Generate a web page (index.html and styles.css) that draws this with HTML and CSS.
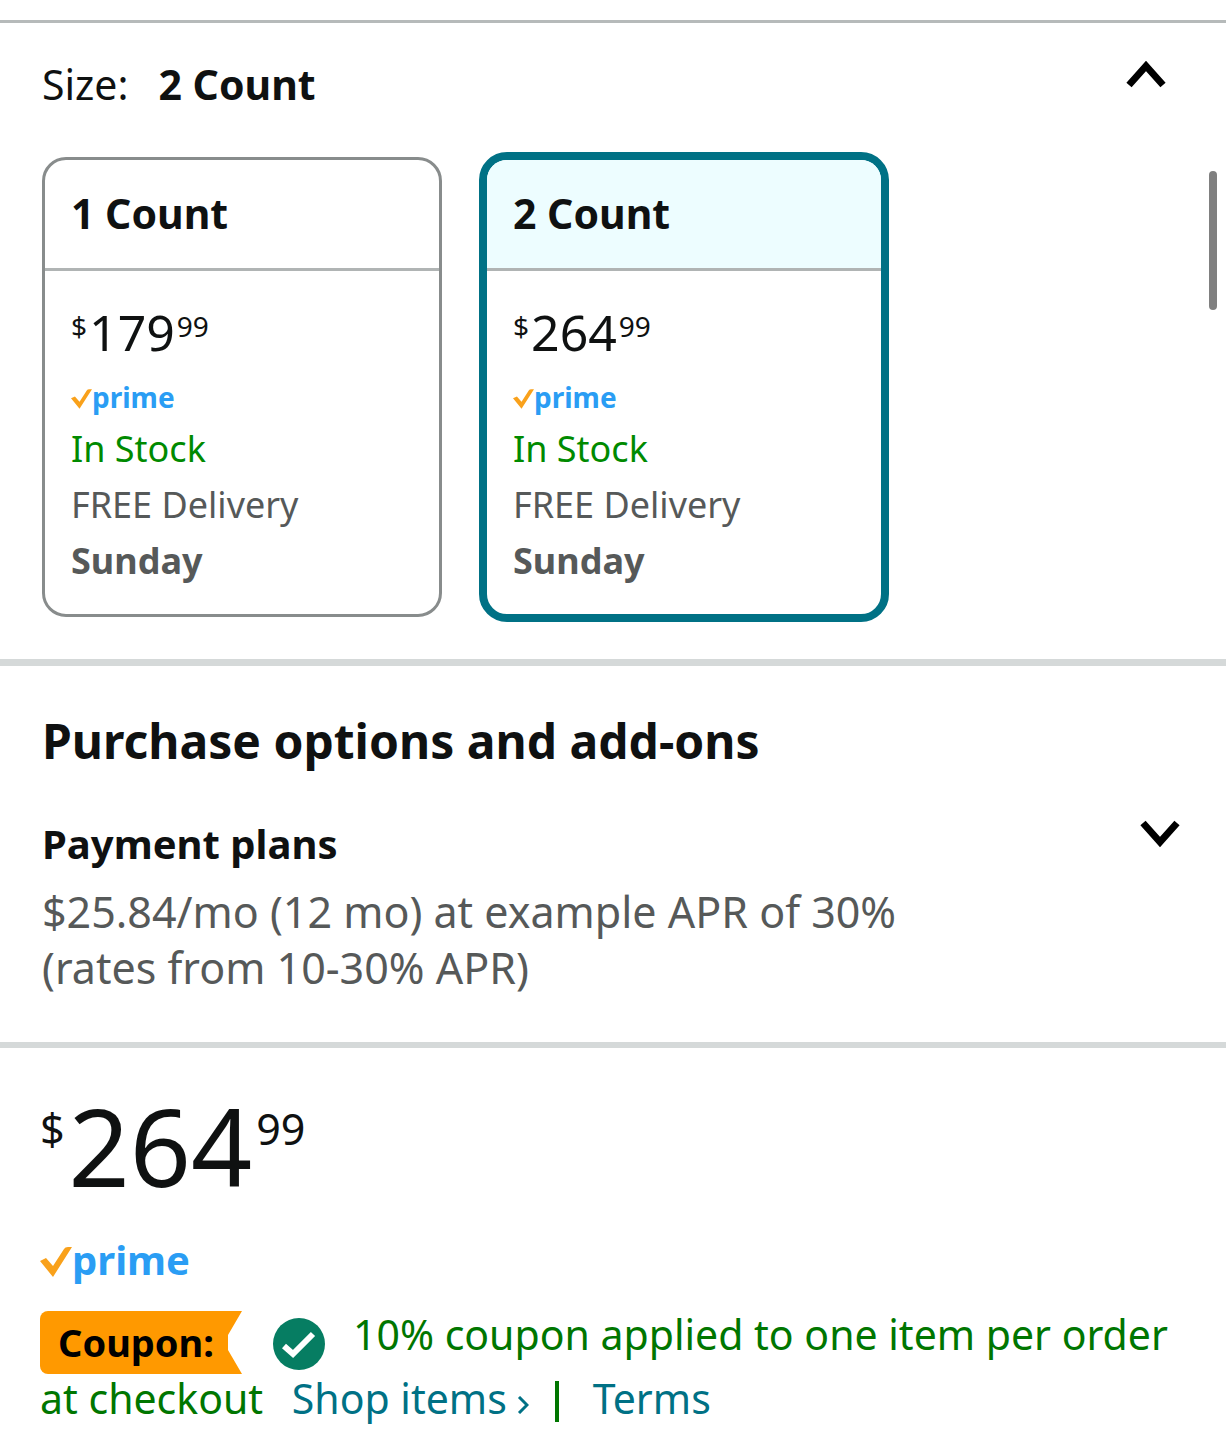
FILE: index.html
```html
<!DOCTYPE html>
<html lang="en">
<head>
<meta charset="utf-8">
<meta name="viewport" content="width=device-width, initial-scale=1">
<title>Product options</title>
<link rel="stylesheet" href="styles.css">
</head>
<body>
<svg class="defs" aria-hidden="true">
  <symbol id="tick" viewBox="0 0 32 30"><path d="M0 14 L6 11 L13 19 L24 2 Q25 0 28 0 L32 0 L13 30 Z"/></symbol>
</svg>
<main>
  <section class="sizes">
    <header class="row">
      <h2 class="size-title"><span>Size:</span> <strong>2 Count</strong></h2>
      <button class="toggle toggle-up" type="button" aria-label="Collapse sizes" aria-expanded="true">
        <svg class="chevron" viewBox="0 0 40 28"><path d="M3 25 L20 6 L37 25"/></svg>
      </button>
    </header>
    <div class="cards">
      <button class="card" type="button" aria-pressed="false">
        <span class="card-name">1 Count</span>
        <span class="card-body">
          <span class="price"><span class="small">$</span>179<span class="small">99</span></span>
          <span class="prime"><svg class="tick"><use href="#tick"/></svg>prime</span>
          <span class="stock">In Stock</span>
          <span>FREE Delivery</span>
          <strong>Sunday</strong>
        </span>
      </button>
      <button class="card selected" type="button" aria-pressed="true">
        <span class="card-name">2 Count</span>
        <span class="card-body">
          <span class="price"><span class="small">$</span>264<span class="small">99</span></span>
          <span class="prime"><svg class="tick"><use href="#tick"/></svg>prime</span>
          <span class="stock">In Stock</span>
          <span>FREE Delivery</span>
          <strong>Sunday</strong>
        </span>
      </button>
    </div>
  </section>

  <section class="options">
    <h1>Purchase options and add-ons</h1>
    <div class="row">
      <div class="plan">
        <h2>Payment plans</h2>
        <p>$25.84/mo (12 mo) at example APR of 30% (rates from 10-30% APR)</p>
      </div>
      <button class="toggle" type="button" aria-label="Expand payment plans" aria-expanded="false">
        <svg class="chevron" viewBox="0 0 40 28"><path d="M3 3 L20 22 L37 3"/></svg>
      </button>
    </div>
  </section>

  <section class="offer">
    <div class="price large"><span class="small">$</span>264<span class="small">99</span></div>
    <div class="prime large"><svg class="tick"><use href="#tick"/></svg>prime</div>
    <p class="coupon"><span class="badge">Coupon:</span><svg class="applied" viewBox="0 0 52 52"><circle cx="26" cy="26" r="26"/><path d="M11 28 L20 36 L40 16"/></svg>10% coupon applied to one item per order at checkout <a class="shop" href="#items">Shop items<svg class="arrow" viewBox="0 0 12 18"><path d="M2 1 L10 9 L2 17"/></svg></a><span class="bar"></span><a href="#terms">Terms</a></p>
  </section>
</main>
<div class="scroll-thumb"></div>
</body>
</html>
```
FILE: styles.css
```css
* { box-sizing: border-box; }

body {
  margin: 0;
  padding-top: 20px;
  background: #fff;
  color: #0f1111;
  font-family: "Noto Sans", "Open Sans", sans-serif;
  font-size: 41px;
  line-height: 56px;
}

h1, h2, p { margin: 0; }
h2 { font-size: 40px; }
button { font: inherit; color: inherit; background: none; border: 0; padding: 0; cursor: pointer; }
svg { display: block; fill: none; }
.defs { position: absolute; width: 0; height: 0; }

.row { display: flex; justify-content: space-between; align-items: flex-start; }
.toggle { flex: none; padding: 4px 6px; }
.toggle-up { margin-right: 14px; }
.chevron { width: 40px; height: 28px; stroke: #000; stroke-width: 7; }

/* Size picker */
.sizes { border-top: 3px solid #b6baba; padding: 33px 40px 37px 42px; }
.size-title { display: flex; gap: 30px; font-size: 41px; font-weight: 400; }

.cards { display: flex; align-items: center; gap: 37px; margin-top: 40px; }
.card {
  display: flex;
  flex-direction: column;
  box-sizing: content-box;
  width: 394px;
  border: 3px solid #888c8c;
  border-radius: 24px;
  overflow: hidden;
  text-align: left;
}
.card.selected { border: 8px solid #007185; border-radius: 28px; }
.card-name {
  padding: 25px 26px 27px;
  border-bottom: 3px solid #b0b4b4;
  font-weight: 700;
}
.selected .card-name { background: #edfdff; }
.card-body {
  display: flex;
  flex-direction: column;
  padding: 31px 26px 25px;
  color: #565959;
  font-size: 36px;
}
.stock { color: #008a00; }

.price { display: flex; align-items: flex-start; gap: 2px; color: #0f1111; font-size: 50px; line-height: 60px; }
.price .small { margin-top: 4px; font-size: 28px; line-height: 40px; }
.price.large { gap: 4px; font-size: 107px; line-height: 120px; }
.price.large .small { margin-top: 15px; font-size: 43px; line-height: 56px; }

.prime {
  display: flex;
  align-items: center;
  margin: 13px 0 2px;
  color: #2a9df4;
  font-size: 28px;
  font-weight: 700;
  line-height: 44px;
}
.tick { width: 21px; height: 20px; margin-top: 4px; fill: #f9a11b; }
.prime.large { margin: 26px 0 0; font-size: 40px; line-height: 56px; }
.prime.large .tick { width: 32px; height: 30px; }

/* Payment plans */
.options { border-top: 7px solid #d5d9d9; padding: 41px 40px 46px 42px; }
h1 { margin-bottom: 41px; font-size: 48px; line-height: 68px; }
.plan { max-width: 900px; }
.plan p { margin-top: 12px; color: #565959; font-size: 43px; }

/* Offer */
.offer { border-top: 6px solid #d5d9d9; padding: 38px 40px 24px; }
.coupon { margin-top: 22px; color: #007600; line-height: 48px; }
.badge {
  display: inline-block;
  vertical-align: -7px;
  height: 63px;
  margin-right: 31px;
  padding: 0 28px 0 18px;
  border-radius: 8px 0 0 8px;
  background: #ff9900;
  clip-path: polygon(0 0, 100% 0, calc(100% - 14px) 38%, calc(100% - 14px) 62%, 100% 100%, 0 100%);
  color: #000;
  font-size: 38px;
  font-weight: 700;
  line-height: 63px;
}
.applied { display: inline-block; vertical-align: -20px; width: 52px; height: 52px; margin-right: 28px; }
.applied circle { fill: #067d62; }
.applied path { stroke: #fff; stroke-width: 6; }
a { color: #007185; text-decoration: none; }
.shop { margin-left: 18px; }
.arrow { display: inline-block; width: 12px; height: 18px; margin-left: 10px; stroke: #007185; stroke-width: 3; }
.bar { display: inline-block; vertical-align: -8px; width: 4px; height: 41px; margin: 0 34px 0 26px; background: #007600; }

.scroll-thumb {
  position: fixed;
  top: 171px;
  right: 9px;
  width: 8px;
  height: 139px;
  border-radius: 4px;
  background: #808080;
}
```
